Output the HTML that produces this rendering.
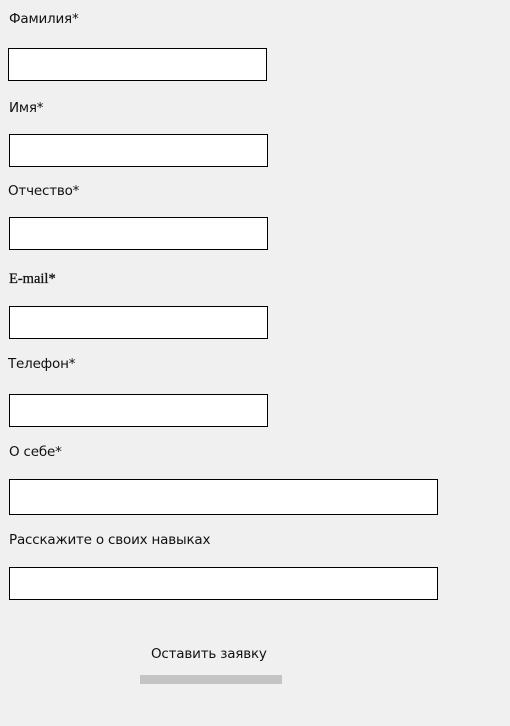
<!DOCTYPE html>
<html><head><meta charset="utf-8"><style>
body{margin:0;width:510px;height:726px;background:#f0f0f0;position:relative;overflow:hidden;font-family:"DejaVu Sans","Liberation Sans",sans-serif;font-size:13.5px;color:#111}
.l{position:absolute;line-height:16px;letter-spacing:-0.2px}
.b{position:absolute;background:#fff;border:1px solid #000;box-sizing:border-box}
</style></head><body>
<div class="l" style="left:9px;top:11px">Фамилия*</div>
<div class="b" style="left:8px;top:48px;width:259px;height:33px"></div>
<div class="l" style="left:9px;top:100px">Имя*</div>
<div class="b" style="left:9px;top:134px;width:259px;height:33px"></div>
<div class="l" style="left:8px;top:183px">Отчество*</div>
<div class="b" style="left:9px;top:217px;width:259px;height:33px"></div>
<div class="l" style="left:9px;top:271px;font-family:'Liberation Serif',serif;font-size:14.5px;letter-spacing:0;-webkit-text-stroke:0.3px #111">E-mail*</div>
<div class="b" style="left:9px;top:306px;width:259px;height:33px"></div>
<div class="l" style="left:8px;top:356px">Телефон*</div>
<div class="b" style="left:9px;top:394px;width:259px;height:33px"></div>
<div class="l" style="left:9px;top:444px">О себе*</div>
<div class="b" style="left:9px;top:479px;width:429px;height:36px"></div>
<div class="l" style="left:9px;top:532px">Расскажите о своих навыках</div>
<div class="b" style="left:9px;top:567px;width:429px;height:33px"></div>
<div class="l" style="left:151px;top:646px">Оставить заявку</div>
<div style="position:absolute;left:140px;top:675px;width:142px;height:9px;background:#c4c4c4"></div>
</body></html>
